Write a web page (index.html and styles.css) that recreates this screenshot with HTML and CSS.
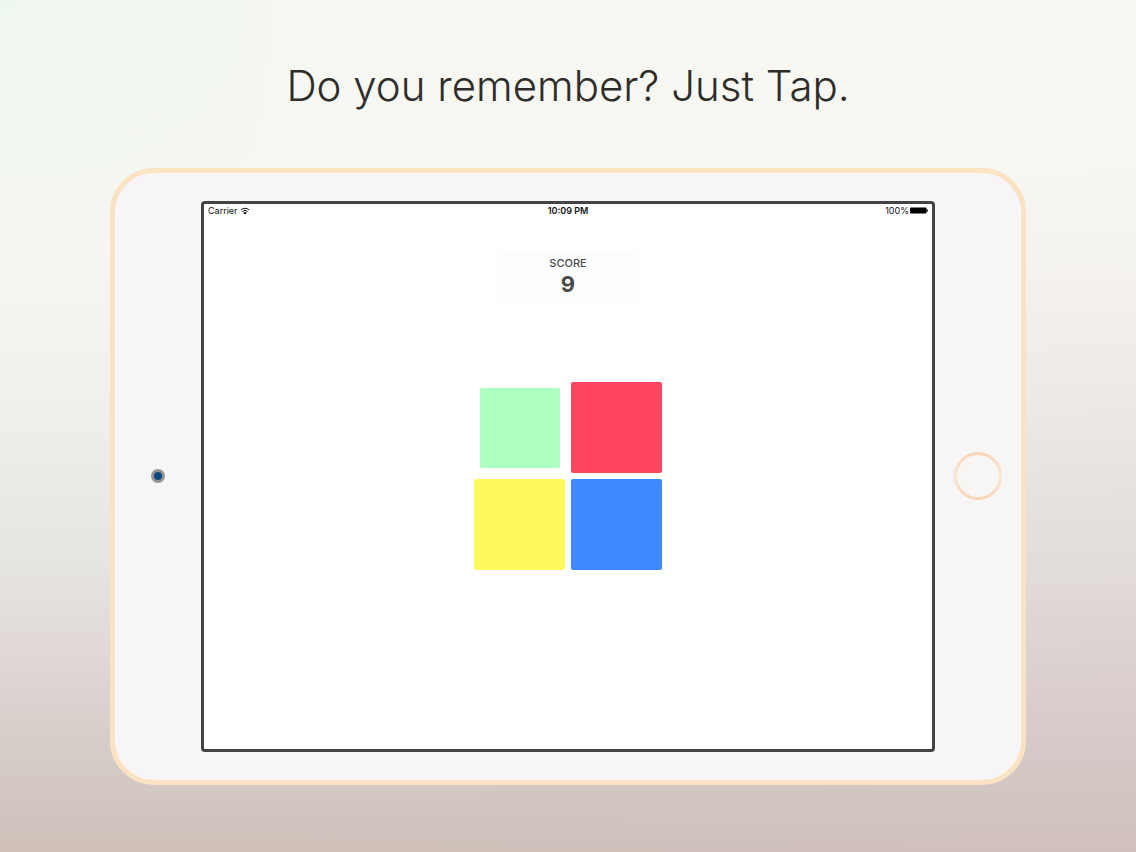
FILE: index.html
```html
<!DOCTYPE html>
<html lang="en">
<head>
    <meta charset="UTF-8">
    <meta name="viewport" content="width=device-width, initial-scale=1.0">
    <title>Do you remember? Just Tap.</title>
    <link rel="stylesheet" href="styles.css">
</head>
<body>
    <h1 class="headline">Do you remember? Just Tap.</h1>

    <div class="tablet">
        <div class="bezel">
            <div class="camera"></div>
        </div>

        <main class="screen">
            <div class="status-bar">
                <div class="status-left">
                    <span>Carrier</span>
                    <svg class="wifi" viewBox="0 0 18 14">
                        <path d="M1.5 5.2a10.6 10.6 0 0 1 15 0M4.2 8a6.8 6.8 0 0 1 9.6 0" fill="none" stroke="#111" stroke-width="1.8"/>
                        <path d="M9 13.5L5.9 10.4a4.4 4.4 0 0 1 6.2 0z" fill="#111"/>
                    </svg>
                </div>
                <span class="status-time">10:09 PM</span>
                <div class="status-right">
                    <span>100%</span>
                    <svg class="battery" viewBox="0 0 18 7">
                        <rect x="0" y="0.5" width="16.5" height="6" rx="1" fill="#000"/>
                        <rect x="16.5" y="2.2" width="1.3" height="2.6" rx="0.6" fill="#000"/>
                    </svg>
                </div>
            </div>

            <div class="score">
                <div class="score-label">SCORE</div>
                <div class="score-value">9</div>
            </div>

            <div class="board">
                <button class="tile green pressed" aria-label="Green"></button>
                <button class="tile red" aria-label="Red"></button>
                <button class="tile yellow" aria-label="Yellow"></button>
                <button class="tile blue" aria-label="Blue"></button>
            </div>
        </main>

        <div class="bezel">
            <button class="home-button" aria-label="Home"></button>
        </div>
    </div>
</body>
</html>
```

FILE: styles.css
```css
* {
    box-sizing: border-box;
}

body {
    margin: 0;
    min-height: 100vh;
    padding: 56px 110px;
    font-family: Inter, "Liberation Sans", sans-serif;
    background:
        radial-gradient(ellipse at 0% 0%, rgba(236, 247, 238, 0.8), transparent 25%),
        radial-gradient(ellipse at 100% 80%, rgba(212, 194, 198, 0.3), transparent 55%),
        linear-gradient(to bottom, #f8f8f3 0%, #f7f6f2 30%, #f0efeb 48%, #e6e5e1 66%, #e1dad6 75%, #d5ccc8 88%, #cfc0b9 100%);
}

.headline {
    margin: 0 0 52px;
    font-size: 42px;
    font-weight: 300;
    line-height: 60px;
    text-align: center;
    white-space: nowrap;
    color: #2e2d2a;
}

.tablet {
    display: grid;
    grid-template-columns: 86px 1fr 86px;
    padding: 28px 0;
    border: 5px solid #fae2c3;
    border-radius: 44px;
    background-color: #f7f5f5;
}

.bezel {
    display: flex;
    align-items: center;
    justify-content: center;
}

.camera {
    width: 14px;
    height: 14px;
    border: 3px solid #929496;
    border-radius: 50%;
    background-color: #12497c;
}

.home-button {
    width: 48px;
    height: 48px;
    padding: 0;
    border: 3px solid transparent;
    border-radius: 50%;
    background:
        linear-gradient(#f8f6f5, #f8f6f5) padding-box,
        linear-gradient(#f8d5b2, #fae8d6, #f8d5b2) border-box;
    cursor: pointer;
}

.screen {
    display: flex;
    flex-direction: column;
    align-items: center;
    aspect-ratio: 4 / 3;
    border: 3px solid #444246;
    border-radius: 4px;
    background-color: #fff;
}

.status-bar {
    display: grid;
    grid-template-columns: 1fr auto 1fr;
    align-items: center;
    width: 100%;
    height: 13px;
    padding: 0 4px;
    font-size: 9px;
    line-height: 12px;
    color: #111;
}

.status-left,
.status-right {
    display: flex;
    align-items: center;
    gap: 2px;
}

.status-right {
    justify-content: flex-end;
    gap: 1px;
}

.status-time {
    font-weight: 600;
}

.wifi {
    width: 10px;
    height: 8px;
}

.battery {
    width: 18px;
    height: 7px;
}

.score {
    width: 142px;
    margin-top: 34px;
    padding: 4px 0 6px;
    text-align: center;
    color: #4a4a4a;
    background-color: #fcfefd;
}

.score-label {
    font-size: 11px;
    font-weight: 500;
    line-height: 16px;
}

.score-value {
    font-size: 22px;
    font-weight: 700;
    line-height: 26px;
}

.board {
    display: grid;
    grid-template-columns: 91px 91px;
    grid-auto-rows: 91px;
    gap: 6px;
    place-items: center;
    margin-top: 79px;
}

.tile {
    width: 91px;
    height: 91px;
    padding: 0;
    border: none;
    border-radius: 2px;
    cursor: pointer;
}

.tile.pressed {
    width: 80px;
    height: 80px;
}

.green {
    background-color: #afffc0;
}

.red {
    background-color: #ff4560;
}

.yellow {
    background-color: #fff95f;
}

.blue {
    background-color: #408aff;
}
```
